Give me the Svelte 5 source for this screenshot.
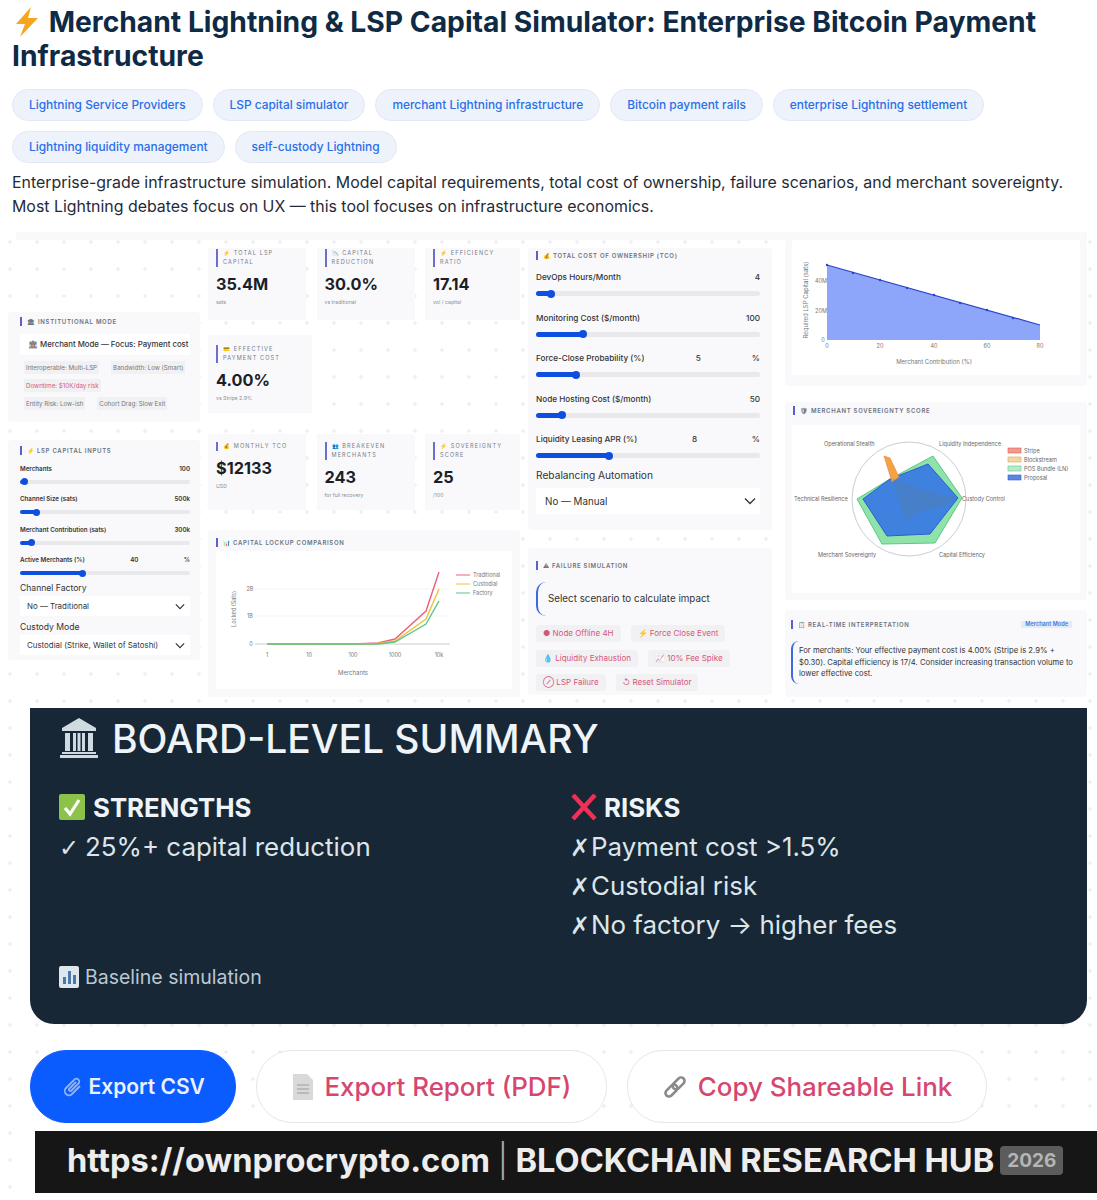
<script>
  const chips = [
    'Lightning Service Providers', 'LSP capital simulator', 'merchant Lightning infrastructure',
    'Bitcoin payment rails', 'enterprise Lightning settlement', 'Lightning liquidity management', 'self-custody Lightning'
  ];
  const lspSliders = [
    { label: 'Merchants', value: '100', pct: 3 },
    { label: 'Channel Size (sats)', value: '500k', pct: 10 },
    { label: 'Merchant Contribution (sats)', value: '300k', pct: 7 },
    { label: 'Active Merchants (%)', value: '40', unit: '%', pct: 37 }
  ];
  const tcoSliders = [
    { label: 'DevOps Hours/Month', value: '4', pct: 6.5 },
    { label: 'Monitoring Cost ($/month)', value: '100', pct: 21 },
    { label: 'Force-Close Probability (%)', value: '5', unit: '%', pct: 18 },
    { label: 'Node Hosting Cost ($/month)', value: '50', pct: 11.5 },
    { label: 'Liquidity Leasing APR (%)', value: '8', unit: '%', pct: 32.5 }
  ];
  const modeTags = [
    [{ text: 'Interoperable: Multi-LSP' }, { text: 'Bandwidth: Low (Smart)' }],
    [{ text: 'Downtime: $10K/day risk', red: true }],
    [{ text: 'Entity Risk: Low-ish' }, { text: 'Cohort Drag: Slow Exit' }]
  ];
  const statsTop = [
    { title: '⚡ Total LSP Capital', value: '35.4M', note: 'sats' },
    { title: '📉 Capital Reduction', value: '30.0%', note: 'vs traditional' },
    { title: '⚡ Efficiency Ratio', value: '17.14', note: 'vol / capital' }
  ];
  const statsBottom = [
    { title: '💰 Monthly TCO', value: '$12133', note: 'USD', tall: false },
    { title: '👥 Breakeven Merchants', value: '243', note: 'for full recovery', tall: true },
    { title: '⚡ Sovereignty Score', value: '25', note: '/100', tall: true }
  ];
  const scenarios = [
    ['● Node Offline 4H', '⚡ Force Close Event'],
    ['💧 Liquidity Exhaustion', '📈 10% Fee Spike'],
    ['⊘ LSP Failure', '↺ Reset Simulator']
  ];
  const strengths = ['25%+ capital reduction'];
  const risks = ['Payment cost >1.5%', 'Custodial risk', 'No factory → higher fees'];
</script>

<main class="page">
  <h1>
    <svg class="bolt" viewBox="0 0 26 30" width="26" height="30"><path d="M17 0 2 17h9L6 30 24 11h-10z" fill="#f7a51c" /></svg>
    Merchant Lightning &amp; LSP Capital Simulator: Enterprise Bitcoin Payment Infrastructure
  </h1>

  <div class="chips">
    {#each chips as chip}
      <span class="chip">{chip}</span>
    {/each}
  </div>

  <p class="intro">
    Enterprise-grade infrastructure simulation. Model capital requirements, total cost of ownership, failure scenarios, and merchant sovereignty.
    Most Lightning debates focus on UX — this tool focuses on infrastructure economics.
  </p>

  <div class="lower">
    <div class="topband"></div>
    <section class="dashboard">
      <div class="col col-left">
        <div class="panel mode-panel">
          <div class="ptitle">🏛 Institutional Mode</div>
          <div class="mode-select">🏛 Merchant Mode — Focus: Payment cost</div>
          {#each modeTags as row}
            <div class="tags">
              {#each row as tag}
                <span class="tag" class:red={tag.red}>{tag.text}</span>
              {/each}
            </div>
          {/each}
        </div>

        <div class="panel inputs-panel">
          <div class="ptitle">⚡ LSP Capital Inputs</div>
          {#each lspSliders as s}
            <div class="slider small">
              <div class="slabel"><span>{s.label}</span><span>{s.value}</span>{#if s.unit}<span>{s.unit}</span>{/if}</div>
              <div class="track"><div class="fill" style="width: {s.pct}%"></div></div>
            </div>
          {/each}
          <div class="flabel small-label">Channel Factory</div>
          <div class="select small-select">No — Traditional
            <svg viewBox="0 0 12 8" width="10" height="7"><path d="M1 1.5 6 6.5 11 1.5" fill="none" stroke="#333" stroke-width="1.4" /></svg>
          </div>
          <div class="flabel small-label">Custody Mode</div>
          <div class="select small-select">Custodial (Strike, Wallet of Satoshi)
            <svg viewBox="0 0 12 8" width="10" height="7"><path d="M1 1.5 6 6.5 11 1.5" fill="none" stroke="#333" stroke-width="1.4" /></svg>
          </div>
        </div>
      </div>

      <div class="col col-stats">
        <div class="stats stats-top">
          {#each statsTop as st}
            <div class="stat">
              <div class="stitle">{st.title}</div>
              <div class="svalue">{st.value}</div>
              <div class="snote">{st.note}</div>
            </div>
          {/each}
        </div>
        <div class="stat stat-single">
          <div class="stitle">💳 Effective Payment Cost</div>
          <div class="svalue">4.00%</div>
          <div class="snote">vs Stripe 2.9%</div>
        </div>
        <div class="stats stats-bottom">
          {#each statsBottom as st}
            <div class="stat">
              <div class="stitle" class:oneline={!st.tall}>{st.title}</div>
              <div class="svalue">{st.value}</div>
              <div class="snote">{st.note}</div>
            </div>
          {/each}
        </div>
        <div class="panel chart-panel">
          <div class="ptitle">📊 Capital Lockup Comparison</div>
          <div class="white-box">
            <svg viewBox="216 552 296 138" width="296" height="138">
              <line x1="255" y1="645" x2="450" y2="645" stroke="#c9ccd2" />
              <line x1="255" y1="617" x2="450" y2="617" stroke="#f4f4f6" />
              <line x1="255" y1="590" x2="450" y2="590" stroke="#f4f4f6" />
              <polyline points="267,645 309,645 353,645 378,644 395,640 426,612 439,573" fill="none" stroke="#ef5f7e" stroke-width="1.4" />
              <polyline points="267,645 309,645 353,645 378,644.5 395,642 426,620 439,590" fill="none" stroke="#e9c53a" stroke-width="1.4" />
              <polyline points="267,645 309,645 353,645 378,645 395,643 426,625 439,602" fill="none" stroke="#5fc58a" stroke-width="1.4" />
              <g fill="#777" font-size="5.5" font-family="Inter, sans-serif" text-anchor="middle">
                <text x="267" y="658">1</text><text x="309" y="658">10</text><text x="353" y="658">100</text><text x="395" y="658">1000</text><text x="439" y="658">10k</text>
                <text x="353" y="676" font-size="6">Merchants</text>
                <text x="250" y="592">2B</text><text x="250" y="619">1B</text><text x="251" y="647">0</text>
                <text transform="translate(236 610) rotate(-90)">Locked (Sats)</text>
              </g>
              <g font-size="5.5" fill="#777" font-family="Inter, sans-serif">
                <line x1="456" y1="576" x2="470" y2="576" stroke="#ef5f7e" /><text x="473" y="578">Traditional</text>
                <line x1="456" y1="585" x2="470" y2="585" stroke="#e9c53a" /><text x="473" y="587">Custodial</text>
                <line x1="456" y1="594" x2="470" y2="594" stroke="#5fc58a" /><text x="473" y="596">Factory</text>
              </g>
            </svg>
          </div>
        </div>
      </div>

      <div class="col col-tco">
        <div class="panel tco-panel">
          <div class="ptitle">💰 Total Cost of Ownership (TCO)</div>
          <div class="tco-sliders">
            {#each tcoSliders as s}
              <div class="slider">
                <div class="slabel"><span>{s.label}</span><span>{s.value}</span>{#if s.unit}<span>{s.unit}</span>{/if}</div>
                <div class="track"><div class="fill" style="width: {s.pct}%"></div></div>
              </div>
            {/each}
          </div>
          <div class="flabel">Rebalancing Automation</div>
          <div class="select">No — Manual
            <svg viewBox="0 0 12 8" width="12" height="8"><path d="M1 1.5 6 6.5 11 1.5" fill="none" stroke="#333" stroke-width="1.3" /></svg>
          </div>
        </div>

        <div class="panel failure-panel">
          <div class="ptitle">⚠ Failure Simulation</div>
          <div class="callout">Select scenario to calculate impact</div>
          {#each scenarios as row}
            <div class="btn-row">
              {#each row as b}
                <span class="sbtn">{b}</span>
              {/each}
            </div>
          {/each}
        </div>
      </div>

      <div class="col col-right">
        <div class="panel area-panel">
          <div class="white-box">
            <svg viewBox="792 240 288 135" width="288" height="135">
              <polygon points="827,265 1040,325 1040,340 827,340" fill="#8ea6fa" />
              <polyline points="827,265 1040,325" fill="none" stroke="#2b44c9" stroke-width="1.2" />
              <g fill="#2b44c9">
                <circle cx="827" cy="265" r="1.2" /><circle cx="853" cy="273" r="1.2" /><circle cx="880" cy="280" r="1.2" /><circle cx="907" cy="288" r="1.2" />
                <circle cx="934" cy="295" r="1.2" /><circle cx="960" cy="303" r="1.2" /><circle cx="987" cy="310" r="1.2" /><circle cx="1013" cy="318" r="1.2" />
              </g>
              <g fill="#777" font-size="5.5" font-family="Inter, sans-serif" text-anchor="middle">
                <text x="827" y="348">0</text><text x="880" y="348">20</text><text x="934" y="348">40</text><text x="987" y="348">60</text><text x="1040" y="348">80</text>
                <text x="821" y="283">40M</text><text x="821" y="313">20M</text><text x="823" y="342">0</text>
                <text x="934" y="364" font-size="6">Merchant Contribution (%)</text>
                <text transform="translate(808 300) rotate(-90)" font-size="6">Required LSP Capital (sats)</text>
              </g>
            </svg>
          </div>
        </div>

        <div class="panel radar-panel">
          <div class="ptitle">🛡 Merchant Sovereignty Score</div>
          <div class="white-box">
            <svg viewBox="792 424 288 168" width="288" height="168">
              <circle cx="909" cy="498" r="57" fill="none" stroke="#c9cdd3" stroke-width="1" />
              <polygon points="933,455 962,497 935,542 882,543 857,498 890,478" fill="#8fe3a9" stroke="#58c98a" />
              <polygon points="928,463 958,497 930,533 887,535 863,498 890,478" fill="#3f81df" stroke="#2d5fd0" />
              <polygon points="884,455 890,457 899,476 892,481" fill="#f2a344" stroke="#ee7d3b" stroke-width="0.6" />
              <polygon points="893,478 925,490 957,497 945,505 920,510 905,520" fill="#4f7fb5" fill-opacity="0.55" />
              <g fill="#666" font-size="5.6" font-family="Inter, sans-serif">
                <text x="824" y="445">Operational Stealth</text>
                <text x="939" y="445">Liquidity Independence</text>
                <text x="794" y="500">Technical Resilience</text>
                <text x="962" y="500">Custody Control</text>
                <text x="818" y="556">Merchant Sovereignty</text>
                <text x="939" y="556">Capital Efficiency</text>
              </g>
              <g font-size="5.6" fill="#666" font-family="Inter, sans-serif">
                <rect x="1008" y="447" width="13" height="5" fill="#f19a8e" stroke="#e2604f" stroke-width="0.6" /><text x="1024" y="452">Stripe</text>
                <rect x="1008" y="456" width="13" height="5" fill="#f2d6a5" stroke="#e2a74f" stroke-width="0.6" /><text x="1024" y="461">Blockstream</text>
                <rect x="1008" y="465" width="13" height="5" fill="#bde8cf" stroke="#58c98a" stroke-width="0.6" /><text x="1024" y="470">POS Bundle (LN)</text>
                <rect x="1008" y="474" width="13" height="5" fill="#5d86e4" stroke="#2d5fd0" stroke-width="0.6" /><text x="1024" y="479">Proposal</text>
              </g>
            </svg>
          </div>
        </div>

        <div class="panel interp-panel">
          <div class="interp-head">
            <div class="ptitle">📋 Real-time Interpretation</div>
            <span class="badge">Merchant Mode</span>
          </div>
          <p class="interp">For merchants: Your effective payment cost is 4.00% (Stripe is 2.9% + $0.30). Capital efficiency is 17/4. Consider increasing transaction volume to lower effective cost.</p>
        </div>
      </div>
    </section>

    <section class="board">
      <h2>
        <svg viewBox="0 0 40 42" width="40" height="42">
          <path d="M20 1 37 11v3H3v-3z" fill="#cfdbe0" />
          <path d="M6 16h5v18H6zM14 16h3v18h-3zM18.500 16h3v18h-3zM23 16h3v18h-3zM29 16h5v18h-5z" fill="#cfdbe0" />
          <path d="M3 35h34v2H3zM1 38h38v3H1z" fill="#cfdbe0" />
        </svg>
        BOARD-LEVEL SUMMARY
      </h2>
      <div class="board-cols">
        <div class="board-col">
          <h3>
            <svg viewBox="0 0 26 26" width="26" height="26"><rect width="26" height="26" rx="2" fill="#8bc34a" /><path d="M6 14l5 6 9-14" fill="none" stroke="#fff" stroke-width="3.2" /></svg>
            STRENGTHS
          </h3>
          {#each strengths as item}
            <div class="bitem"><span class="mark">✓</span>{item}</div>
          {/each}
        </div>
        <div class="board-col risks">
          <h3>
            <svg viewBox="0 0 28 26" width="28" height="26"><path d="M3 1l22 24M25 1 3 25" fill="none" stroke="#ef2f55" stroke-width="4.5" /></svg>
            RISKS
          </h3>
          {#each risks as item}
            <div class="bitem"><span class="mark">✗</span>{item}</div>
          {/each}
        </div>
      </div>
      <div class="baseline">
        <svg viewBox="0 0 20 22" width="20" height="22"><rect width="20" height="22" rx="2" fill="#dfe7ee" /><path d="M4 18V11h3v7zM9 18V5h3v13zM14 18V9h3v9z" fill="#4a78a8" /></svg>
        Baseline simulation
      </div>
    </section>

    <div class="actions">
      <button class="primary">
        <svg viewBox="0 0 22 22" width="22" height="22"><path d="M18 10 10 18a4 4 0 0 1-6-6l9-9a3 3 0 0 1 4 4l-8 8a1.500 1.500 0 0 1-2-2l7-7" fill="none" stroke="#8fb4ff" stroke-width="1.8" /></svg>
        Export CSV
      </button>
      <button>
        <svg viewBox="0 0 22 28" width="22" height="28"><path d="M1 1h14l6 6v20H1z" fill="#d9d9d9" /><path d="M5 12h12M5 16h12M5 20h12" stroke="#b0b0b0" stroke-width="1.500" /></svg>
        Export Report (PDF)
      </button>
      <button class="copy">
        <svg viewBox="0 0 26 26" width="26" height="26"><g fill="none" stroke="#8a8a8a" stroke-width="2.6"><rect x="-5" y="-3.500" width="14" height="7" rx="3.500" transform="translate(8 18) rotate(-45)" /><rect x="-9" y="-3.500" width="14" height="7" rx="3.500" transform="translate(18 8) rotate(-45)" /></g></svg>
        Copy Shareable Link
      </button>
    </div>

    <div class="banner">
      <span class="url">https://ownprocrypto.com <span class="sep">|</span> BLOCKCHAIN RESEARCH HUB</span>
      <span class="year">2026</span>
    </div>
  </div>
</main>

<style>
  :global(body) {
    margin: 0;
    background: #fff;
    font-family: Inter, "Liberation Sans", sans-serif;
    color: #1d2a36;
  }

  .page {
    width: 1097px;
    height: 1200px;
    box-sizing: border-box;
    overflow: hidden;
    padding-top: 5px;
  }

  h1 {
    margin: 0 12px 16px;
    font-size: 28.25px;
    line-height: 34px;
    font-weight: 700;
    color: #0f2a44;
  }

  .bolt {
    vertical-align: -5px;
    margin: 0 2px 0 2px;
  }

  .chips {
    display: flex;
    flex-wrap: wrap;
    gap: 10px;
    margin: 0 12px;
    width: 1000px;
  }

  .chip {
    height: 32px;
    line-height: 30px;
    box-sizing: border-box;
    padding: 0 16px;
    border-radius: 16px;
    background: #edf2fb;
    border: 1px solid #e3e9f4;
    color: #2a6fe8;
    font-size: 11.9px;
    font-weight: 500;
  }

  .intro {
    margin: 8px 12px 0;
    width: 1065px;
    font-size: 15.9px;
    line-height: 24px;
    color: #1f2c38;
  }

  .lower {
    margin-top: 13px;
    padding-bottom: 10px;
    background-image: radial-gradient(circle at 10px 10px, #f0f0f3 1.5px, transparent 2px);
    background-size: 27px 27px;
  }

  .topband {
    height: 8px;
    margin-left: 16px;
    width: 1071px;
    background: #f9f9fb;
  }

  .dashboard {
    display: flex;
    height: 459px;
    padding-left: 8px;
  }

  .col {
    display: flex;
    flex-direction: column;
    box-sizing: border-box;
  }

  .col-left { width: 192px; padding-top: 72px; gap: 18px; margin-right: 8px; }
  .col-stats { width: 312px; padding-top: 8px; margin-right: 8px; }
  .col-tco { width: 244px; padding-top: 8px; gap: 18px; margin-right: 13px; }
  .col-right { width: 302px; }

  .panel {
    background: #f9f9fb;
    box-sizing: border-box;
    border-radius: 4px;
  }

  .ptitle {
    border-left: 2px solid #5a62c9;
    padding-left: 5px;
    font-size: 6px;
    line-height: 9px;
    font-weight: 600;
    letter-spacing: 0.7px;
    text-transform: uppercase;
    color: #6b7280;
  }

  .mode-panel { height: 110px; padding: 5px 10px 5px 12px; }

  .mode-select {
    margin: 8px 0 6px;
    background: #fff;
    height: 21px;
    line-height: 21px;
    font-size: 7.8px;
    padding-left: 8px;
    white-space: nowrap;
    overflow: hidden;
    color: #333;
    font-weight: 500;
  }

  .tags {
    display: flex;
    gap: 12px;
    margin-bottom: 5px;
    padding-left: 4px;
  }

  .tag {
    background: #f1f1f3;
    font-size: 6.2px;
    line-height: 13px;
    padding: 0 2px;
    color: #777;
    white-space: nowrap;
  }

  .tag.red { color: #d65a78; }

  .inputs-panel { height: 220px; padding: 6px 10px 6px 12px; }

  .slider.small { margin-top: 9.500px; height: 21px; }
  .inputs-panel .ptitle { margin-bottom: 9px; }

  .slabel {
    display: flex;
    justify-content: space-between;
    align-items: center;
    font-size: 8.2px;
    line-height: 12px;
    color: #333;
    font-weight: 500;
  }

  .small .slabel { font-size: 6.2px; line-height: 8px; font-weight: 600; }

  .track {
    margin-top: 8px;
    height: 5px;
    background: #e9e9ec;
    border-radius: 3px;
  }

  .small .track { margin-top: 7px; height: 4px; }

  .fill {
    position: relative;
    height: 100%;
    background: #0f4fe0;
    border-radius: 3px;
  }

  .fill::after {
    content: '';
    position: absolute;
    right: -4px;
    top: 50%;
    width: 8px;
    height: 8px;
    margin-top: -4px;
    border-radius: 50%;
    background: #0f4fe0;
  }

  .small .fill::after { width: 7px; height: 7px; margin-top: -3.5px; right: -3px; }

  .flabel {
    font-size: 10.2px;
    line-height: 14px;
    color: #333;
    margin-top: 10px;
  }

  .small-label { font-size: 8.6px; line-height: 10px; margin-top: 6px; }

  .select {
    display: flex;
    justify-content: space-between;
    align-items: center;
    margin-top: 6px;
    height: 26px;
    padding: 0 4px 0 9px;
    background: #fff;
    font-size: 9.8px;
    color: #333;
  }

  .small-select {
    height: 20px;
    margin: 3px 0 0;
    padding: 0 5px 0 7px;
    font-size: 7.9px;
    white-space: nowrap;
  }

  .stats {
    display: grid;
    grid-template-columns: 98px 98px 95px;
    column-gap: 10.500px;
  }

  .stat {
    background: #f9f9fb;
    padding: 1px 8px;
    box-sizing: border-box;
  }

  .stats-top .stat { height: 72px; }
  .stats-bottom .stat { height: 76px; padding-top: 8px; }
  .stat-single { width: 104px; height: 78px; margin-top: 15px; padding-top: 10px; }
  .stats-bottom { margin-top: 21px; }

  .stitle {
    border-left: 2px solid #6a70c9;
    padding-left: 5px;
    font-size: 5.6px;
    line-height: 9px;
    letter-spacing: 1.1px;
    text-transform: uppercase;
    color: #74798a;
    min-height: 18px;
  }

  .stitle.oneline { min-height: 9px; }

  .svalue {
    margin-top: 7px;
    font-size: 16.3px;
    line-height: 21px;
    font-weight: 700;
    color: #1b1f2a;
  }

  .snote {
    font-size: 5.2px;
    line-height: 8px;
    color: #8a8f99;
    margin-top: 3px;
  }

  .chart-panel {
    margin-top: 20px;
    height: 167px;
    padding: 8px 8px;
  }

  .chart-panel .ptitle { margin-bottom: 4px; }

  .white-box {
    background: #fff;
    line-height: 0;
  }

  .white-box svg { display: block; }

  .tco-panel { height: 282px; padding: 3px 12px 0 8px; }
  .tco-panel .ptitle { margin-bottom: 11px; }

  .tco-sliders {
    display: flex;
    flex-direction: column;
    gap: 15.500px;
  }

  .failure-panel { height: 147px; padding: 13px 8px 0; }

  .callout {
    margin: 12px 0 9px;
    border-left: 2px solid #3d6bdc;
    border-radius: 10px 0 0 10px;
    padding-left: 10px;
    font-size: 9.8px;
    line-height: 34px;
    color: #333;
  }

  .btn-row {
    display: flex;
    gap: 10px;
    margin-bottom: 7.500px;
  }

  .sbtn {
    background: #f1f1f3;
    border-radius: 3px;
    padding: 0 7px;
    font-size: 8px;
    line-height: 17px;
    color: #d6557a;
    white-space: nowrap;
  }

  .area-panel { height: 146px; padding: 0 7px; }
  .radar-panel { height: 198px; margin-top: 16px; padding: 4px 7px; }
  .radar-panel .ptitle { margin-bottom: 10px; margin-left: 1px; }
  .interp-panel { height: 87px; margin-top: 10px; padding: 10px 7px 10px 6px; }

  .interp-head {
    display: flex;
    justify-content: space-between;
    align-items: center;
  }

  .badge {
    background: #e2ecfb;
    color: #3b7be0;
    font-size: 5.6px;
    line-height: 7px;
    padding: 0 4px;
    margin-right: 8px;
    font-weight: 600;
  }

  .interp {
    margin: 12px 0 0;
    border-left: 2px solid #3d6bdc;
    border-radius: 8px 0 0 8px;
    padding: 4px 6px 4px 6px;
    font-size: 7.7px;
    line-height: 11.500px;
    color: #333;
  }

  .board {
    box-sizing: border-box;
    margin: 9px 10px 0 30px;
    height: 316px;
    padding: 6px 29px 0;
    background: #172736;
    border-radius: 0 0 24px 24px;
    color: #eef4f7;
  }

  .board h2 {
    display: flex;
    align-items: center;
    gap: 13px;
    margin: 0;
    height: 48px;
    font-size: 39px;
    font-weight: 500;
    white-space: nowrap;
  }

  .board-cols {
    display: flex;
    margin-top: 29px;
    height: 174px;
  }

  .board-col { flex: none; width: 511px; }
  .board-col.risks { width: 470px; }

  .board h3 {
    display: flex;
    align-items: center;
    gap: 8px;
    margin: 0 0 4px;
    height: 32px;
    font-size: 25.8px;
    font-weight: 700;
  }

  .risks h3 { gap: 6px; }

  .bitem {
    height: 39px;
    font-size: 25.9px;
    line-height: 39px;
    color: #dce5ea;
  }

  .mark {
    display: inline-block;
    width: 26px;
    font-family: "DejaVu Sans", sans-serif;
    font-weight: 700;
    font-size: 24px;
    line-height: 1;
  }

  .risks .mark { width: 21px; }

  .baseline {
    display: flex;
    align-items: center;
    gap: 6px;
    font-size: 19.500px;
    line-height: 24px;
    color: #bcc8d1;
  }

  .actions {
    display: flex;
    gap: 20px;
    margin: 26px 0 0 30px;
  }

  button {
    display: flex;
    align-items: center;
    justify-content: center;
    gap: 10px;
    height: 73px;
    border-radius: 36px;
    border: 1.5px solid #e7e7ea;
    background: #fff;
    font-family: inherit;
    font-size: 25.900px;
    font-weight: 500;
    color: #d6476f;
    padding: 0 35px;
    white-space: nowrap;
  }

  button.copy { padding: 0 33.500px; }

  button.primary {
    background: #0a5cff;
    border-color: #0a5cff;
    color: #eaf1ff;
    font-size: 21px;
    font-weight: 600;
    padding: 0 30.500px;
    gap: 5px;
  }

  .banner {
    display: flex;
    align-items: center;
    gap: 6px;
    margin: 8px 0 0 35px;
    height: 62px;
    box-sizing: border-box;
    padding: 0 0 4px 32px;
    background: #161616;
    color: #ededed;
    font-size: 32.6px;
    font-weight: 700;
    white-space: nowrap;
  }

  .sep { font-weight: 300; color: #aaa; }

  .year {
    background: #5c5c5c;
    color: #b5b5b5;
    font-size: 19px;
    font-weight: 700;
    border-radius: 4px;
    padding: 3px 7px;
  }
</style>
